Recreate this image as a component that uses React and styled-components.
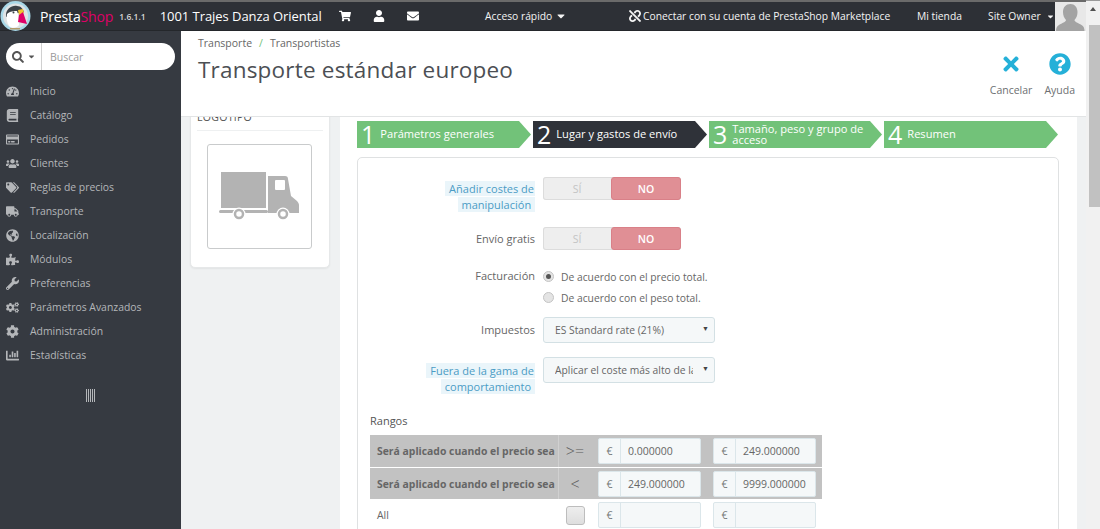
import styled, { createGlobalStyle } from "styled-components";
import {
  FaTachometerAlt,
  FaBook,
  FaRegCreditCard,
  FaUsers,
  FaTags,
  FaTruck,
  FaGlobeAmericas,
  FaPuzzlePiece,
  FaWrench,
  FaCogs,
  FaCog,
  FaSearch,
  FaShoppingCart,
  FaUser,
  FaEnvelope,
  FaUnlink,
  FaTimes,
  FaQuestionCircle,
  FaCaretDown,
  FaChartBar,
} from "react-icons/fa";

const GlobalStyle = createGlobalStyle`
  html, body { margin: 0; padding: 0; height: 100%; overflow: hidden; }
  body { font-family: "Open Sans", "Liberation Sans", sans-serif; font-size: 11px; color: #555; }
  * { box-sizing: border-box; }
`;

const Window = styled.div`
  display: flex;
  width: 1100px;
  height: 529px;
  overflow: hidden;
  background: #eff1f2;
`;

const Page = styled.div`
  flex: 1;
  min-width: 0;
  display: flex;
  flex-direction: column;
`;

const Scrollbar = styled.div`
  width: 14px;
  background: #f1f1f1;
  border-top: 1px solid #9a9a9a;
  display: flex;
  flex-direction: column;
  align-items: center;
`;

const ScrollArrow = styled.div`
  height: 16px;
  padding-top: 6px;
  &::before {
    content: "";
    display: block;
    border-left: 3px solid transparent;
    border-right: 3px solid transparent;
    border-bottom: 4px solid #505050;
  }
`;

const ScrollThumb = styled.div`
  margin: 8px 0 0 2px;
  width: 11px;
  height: 182px;
  background: #c1c1c1;
`;

const TopBar = styled.header`
  height: 31px;
  flex: none;
  display: flex;
  align-items: center;
  background: #2d3036;
  border-top: 2px solid #6a6a6a;
  border-bottom: 1px solid #24272b;
  color: #fff;
  position: relative;
`;

const LogoMark = styled.svg`
  width: 32px;
  height: 32px;
  flex: none;
  margin: -1px 0 0 0;
`;

const Brand = styled.span`
  margin-left: 8px;
  font-size: 14.1px;
  color: #fff;
  letter-spacing: -0.2px;
  em { font-style: normal; color: #df0067; }
`;

const Version = styled.span`
  margin-left: 6px;
  font-size: 8.5px;
  font-weight: 600;
  color: #d8d8d8;
`;

const ShopName = styled.span`
  margin-left: 14px;
  font-size: 13px;
  letter-spacing: -0.05px;
`;

const QuickIcons = styled.div`
  display: flex;
  align-items: center;
  gap: 22px;
  margin-left: 17px;
  font-size: 12px;
  svg { display: block; }
`;

const BarItem = styled.span`
  position: absolute;
  left: ${(p) => p.$left}px;
  top: 6px;
  font-size: 10.3px;
  line-height: 16px;
  display: flex;
  align-items: center;
  gap: ${(p) => p.$gap || 2}px;
  white-space: nowrap;
  color: #f4f4f4;
`;

const Avatar = styled.div`
  position: absolute;
  left: 1055px;
  top: 0;
  width: 31px;
  height: 29px;
  background: #e8e8e8;
  overflow: hidden;
`;

const Body = styled.div`
  flex: 1;
  min-height: 0;
  display: flex;
`;

const Sidebar = styled.aside`
  width: 181px;
  flex: none;
  background: #363a41;
  padding-top: 12px;
`;

const SearchBox = styled.div`
  display: flex;
  align-items: center;
  margin: 0 6px 0 6px;
  height: 27px;
  border-radius: 14px;
  background: #fff;
`;

const SearchButton = styled.div`
  width: 36px;
  height: 100%;
  display: flex;
  align-items: center;
  justify-content: center;
  gap: 3px;
  color: #555;
  font-size: 12px;
  border-right: 1px solid #d0d0d0;
`;

const SearchHint = styled.span`
  margin-left: 8px;
  font-size: 10.5px;
  color: #9a9a9a;
`;

const Menu = styled.nav`
  margin-top: 9px;
`;

const MenuItem = styled.div`
  height: 24px;
  display: flex;
  align-items: center;
  color: #b4b6b9;
  font-size: 10.4px;
`;

const MenuIcon = styled.span`
  width: 30px;
  padding-left: 6px;
  display: flex;
  justify-content: flex-start;
  font-size: 13px;
  color: #b4b6b9;
  svg { display: block; }
`;

const Collapse = styled.div`
  width: 9px;
  height: 13px;
  margin: 22px 0 0 86px;
  background: repeating-linear-gradient(90deg, #b4b6b9 0 1px, #363a41 1px 2px);
`;

const Main = styled.main`
  flex: 1;
  min-width: 0;
  display: flex;
  flex-direction: column;
  overflow: hidden;
`;

const PageHead = styled.div`
  height: 86px;
  flex: none;
  background: #fff;
  border-bottom: 1px solid #e2e4e5;
  padding: 5px 11px 0 17px;
  display: flex;
  justify-content: space-between;
  position: relative;
  z-index: 1;
`;

const Crumbs = styled.div`
  font-size: 10.5px;
  line-height: 15px;
  color: #666;
  i { font-style: normal; color: #72c279; margin: 0 7px; }
`;

const Title = styled.h1`
  margin: 3px 0 0;
  font-size: 22.5px;
  line-height: 32px;
  font-weight: 400;
  letter-spacing: 0.2px;
  color: #4c4f54;
`;

const Actions = styled.div`
  display: flex;
  gap: 12px;
  padding-top: 17px;
`;

const Action = styled.div`
  display: flex;
  flex-direction: column;
  align-items: center;
  gap: 8px;
  font-size: 10.5px;
  line-height: 14px;
  color: #6d6f72;
  svg { color: #25b0d8; font-size: 22px; display: block; }
`;

const Content = styled.div`
  flex: 1;
  min-height: 0;
  display: flex;
  align-items: flex-start;
  padding-left: 9px;
`;

const LogoCard = styled.section`
  width: 140px;
  flex: none;
  margin-top: -9px;
  height: 160px;
  background: #fff;
  border: 1px solid #e6e8e9;
  border-radius: 5px;
  box-shadow: 0 1px 2px rgba(0, 0, 0, 0.06);
  padding: 0 6px;
`;

const LogoTitle = styled.div`
  height: 22px;
  line-height: 16px;
  font-size: 10.5px;
  letter-spacing: 0.3px;
  color: #555;
  border-bottom: 1px solid #eef0f1;
`;

const TruckFrame = styled.div`
  margin: 13px 10px 0;
  width: 105px;
  height: 105px;
  border: 1px solid #c9cbcc;
  border-radius: 3px;
  display: flex;
  align-items: center;
  justify-content: center;
`;

const Wizard = styled.div`
  margin-left: 10px;
  width: 737px;
  background: #fff;
  padding: 4px 18px 0 17px;
  min-height: 500px;
`;

const Steps = styled.div`
  display: flex;
  gap: 2px;
  height: 27px;
`;

const Step = styled.div`
  width: ${(p) => p.$width}px;
  height: 27px;
  flex: none;
  display: flex;
  align-items: center;
  color: #fff;
  background: ${(p) => (p.$active ? "#2f3239" : "#72c279")};
  clip-path: polygon(0 0, calc(100% - 12px) 0, 100% 50%, calc(100% - 12px) 100%, 0 100%);
  padding-left: 4px;
  font-size: 11.1px;
  line-height: 11px;
  font-weight: 500;
`;

const StepNumber = styled.span`
  font-size: 25px;
  line-height: 27px;
  font-weight: 400;
  margin-right: 5px;
`;

const StepText = styled.span`
  width: 140px;
  margin-top: -2px;
`;

const FormCard = styled.div`
  margin-top: 9px;
  border: 1px solid #dfe1e2;
  border-radius: 5px 5px 0 0;
  padding: 19px 0 0 12px;
  min-height: 380px;
`;

const Row = styled.div`
  display: flex;
  align-items: ${(p) => p.$align || "flex-start"};
  margin-bottom: ${(p) => p.$gap || 0}px;
`;

const LabelCell = styled.div`
  width: 165px;
  flex: none;
  text-align: right;
  padding-top: ${(p) => p.$top || 0}px;
  font-size: 11px;
  line-height: 16px;
  color: #666;
`;

const HelpLabel = styled.span`
  color: #4a9cc5;
  background: #eaf5fa;
  box-decoration-break: clone;
  -webkit-box-decoration-break: clone;
  padding: 0 1px 0 4px;
  line-height: 16px;
`;

const Field = styled.div`
  margin-left: 8px;
`;

const Toggle = styled.div`
  display: flex;
  width: 138px;
  height: 23px;
  border-radius: 3px;
  background: #eeeeee;
  box-shadow: inset 0 0 0 1px #dcdcdc;
`;

const ToggleSide = styled.div`
  flex: 1;
  display: flex;
  align-items: center;
  justify-content: center;
  font-size: 10.5px;
  font-weight: ${(p) => (p.$on ? 600 : 400)};
  border-radius: 3px;
  color: ${(p) => (p.$on ? "#fff" : "#c4c4c4")};
  background: ${(p) => (p.$on ? "#e08f95" : "transparent")};
  border: ${(p) => (p.$on ? "1px solid #d98088" : "none")};
`;

const RadioLine = styled.label`
  height: 21px;
  display: flex;
  align-items: center;
  gap: 7px;
  font-size: 10.3px;
  color: #666;
`;

const Radio = styled.span`
  width: 11px;
  height: 11px;
  border-radius: 50%;
  border: 1px solid #c4c4c4;
  background: #e4e4e4;
  display: flex;
  align-items: center;
  justify-content: center;
  &::after {
    content: "";
    width: 5px;
    height: 5px;
    border-radius: 50%;
    background: ${(p) => (p.$checked ? "#555" : "transparent")};
  }
`;

const Select = styled.div`
  width: 172px;
  height: 26px;
  padding: 0 5px 0 11px;
  display: flex;
  align-items: center;
  justify-content: space-between;
  font-size: 10.3px;
  color: #666;
  background: #f5f8f9;
  border: 1px solid #d3e0e4;
  border-radius: 3px;
  span { width: 138px; overflow: hidden; white-space: nowrap; }
  b { font-size: 7px; color: #444; margin-top: -3px; }
`;

const RangesTitle = styled.div`
  margin-top: 18px;
  font-size: 11px;
  line-height: 16px;
  color: #555;
`;

const RangeTable = styled.div`
  margin-top: 6px;
  width: 452px;
`;

const RangeRow = styled.div`
  display: flex;
  align-items: center;
  height: ${(p) => p.$height}px;
  margin-bottom: 1px;
  background: ${(p) => (p.$head ? "#c2c2c2" : "#fff")};
`;

const RangeLabel = styled.div`
  width: 189px;
  height: 100%;
  flex: none;
  display: flex;
  align-items: center;
  padding-left: 7px;
  font-size: 10.4px;
  font-weight: ${(p) => (p.$head ? 700 : 400)};
  color: #666;
  border-right: ${(p) => (p.$head ? "1px solid #d0d0d0" : "none")};
  white-space: nowrap;
`;

const Operator = styled.div`
  width: 32px;
  flex: none;
  text-align: center;
  font-size: 16px;
  font-weight: 300;
  color: #5c5c5c;
`;

const CheckBox = styled.div`
  width: 19px;
  height: 19px;
  margin: 0 auto;
  background: linear-gradient(#eeeeee, #dedede);
  border: 1px solid #bdbdbd;
  border-radius: 3px;
`;

const Money = styled.div`
  display: flex;
  width: 103px;
  height: 26px;
  margin: 0 12px 0 7px;
  flex: none;
  background: #f5f8f9;
  border: 1px solid #dbe6ea;
  border-radius: 2px;
  font-size: 10.5px;
  color: #666;
  & + & { margin-left: 0; }
`;

const Currency = styled.span`
  width: 22px;
  display: flex;
  align-items: center;
  justify-content: center;
  border-right: 1px solid #dbe6ea;
  color: #777;
`;

const Amount = styled.span`
  flex: 1;
  display: flex;
  align-items: center;
  padding-left: 7px;
`;

const menu = [
  ["Inicio", FaTachometerAlt],
  ["Catálogo", FaBook],
  ["Pedidos", FaRegCreditCard],
  ["Clientes", FaUsers],
  ["Reglas de precios", FaTags],
  ["Transporte", FaTruck],
  ["Localización", FaGlobeAmericas],
  ["Módulos", FaPuzzlePiece],
  ["Preferencias", FaWrench],
  ["Parámetros Avanzados", FaCogs],
  ["Administración", FaCog],
  ["Estadísticas", FaChartBar],
];

const ranges = [
  [">=", "0.000000", "249.000000", 32],
  ["<", "249.000000", "9999.000000", 31],
];

function Puffin() {
  return (
    <LogoMark viewBox="0 0 32 32">
      <circle cx="15.5" cy="16" r="15" fill="#a9d8e8" />
      <circle cx="15.5" cy="16" r="12.5" fill="#dfe3e5" />
      <path d="M6 15c0-6 6-10 11-9 4 0 6 3 7 6l-6 1-12 4z" fill="#3c4248" />
      <path d="M7 14c3-3 7-3 10-3l1 3 1 11c-2 3-7 4-10 1-2-3-3-8-2-12z" fill="#ffffff" />
      <circle cx="13.5" cy="12.5" r="1" fill="#3c4248" />
      <path d="M18 10l5-1 1 4-5 2z" fill="#f2c230" />
      <path d="M19 15l4-3 4 12-9-2z" fill="#df0067" />
      <path d="M10 28h10v1.5H10z" fill="#b39b6b" />
    </LogoMark>
  );
}

function TruckPicture() {
  return (
    <svg width="82" height="50" viewBox="0 0 82 50">
      <rect x="2" y="0" width="45" height="36" fill="#b3b3b3" />
      <path d="M49 4h17c2 0 3 1 3 3l3 17 6 5c1 1 2 3 2 4v8H49z" fill="#b3b3b3" />
      <rect x="56" y="8" width="10" height="10" rx="1" fill="#fff" />
      <rect x="0" y="38" width="49" height="3" rx="1.5" fill="#b3b3b3" />
      <circle cx="20" cy="42" r="6.5" fill="#fff" />
      <circle cx="20" cy="42" r="4" fill="none" stroke="#b3b3b3" strokeWidth="2.5" />
      <circle cx="64" cy="42" r="6.5" fill="#fff" />
      <circle cx="64" cy="42" r="4" fill="none" stroke="#b3b3b3" strokeWidth="2.5" />
    </svg>
  );
}

export default function App() {
  return (
    <Window>
      <GlobalStyle />
      <Page>
        <TopBar>
          <Puffin />
          <Brand>
            Presta<em>Shop</em>
          </Brand>
          <Version>1.6.1.1</Version>
          <ShopName>1001 Trajes Danza Oriental</ShopName>
          <QuickIcons>
            <FaShoppingCart />
            <FaUser />
            <FaEnvelope />
          </QuickIcons>
          <BarItem $left={485} $gap={3}>
            Acceso rápido <FaCaretDown size={12} />
          </BarItem>
          <BarItem $left={629}>
            <FaUnlink size={12} /> Conectar con su cuenta de PrestaShop Marketplace
          </BarItem>
          <BarItem $left={917}>Mi tienda</BarItem>
          <BarItem $left={988} $gap={5}>
            Site Owner <FaCaretDown size={9} />
          </BarItem>
          <Avatar>
            <svg width="31" height="29" viewBox="0 0 31 29">
              <path
                d="M15.5 2c4 0 7 3 7 8 0 3-1 6-3 8 0 2 4 3 7 5 2 1 3 3 3 6H1c0-3 1-5 3-6 3-2 7-3 7-5-2-2-3-5-3-8 0-5 3-8 7.5-8z"
                fill="#a3a3a3"
              />
            </svg>
          </Avatar>
        </TopBar>
        <Body>
          <Sidebar>
            <SearchBox>
              <SearchButton>
                <FaSearch />
                <FaCaretDown size={9} />
              </SearchButton>
              <SearchHint>Buscar</SearchHint>
            </SearchBox>
            <Menu>
              {menu.map(([label, Icon]) => (
                <MenuItem key={label}>
                  <MenuIcon>
                    <Icon />
                  </MenuIcon>
                  {label}
                </MenuItem>
              ))}
            </Menu>
            <Collapse />
          </Sidebar>
          <Main>
            <PageHead>
              <div>
                <Crumbs>
                  Transporte<i>/</i>Transportistas
                </Crumbs>
                <Title>Transporte estándar europeo</Title>
              </div>
              <Actions>
                <Action>
                  <FaTimes />
                  Cancelar
                </Action>
                <Action>
                  <FaQuestionCircle />
                  Ayuda
                </Action>
              </Actions>
            </PageHead>
            <Content>
              <LogoCard>
                <LogoTitle>LOGOTIPO</LogoTitle>
                <TruckFrame>
                  <TruckPicture />
                </TruckFrame>
              </LogoCard>
              <Wizard>
                <Steps>
                  <Step $width={174}>
                    <StepNumber>1</StepNumber>
                    <StepText>Parámetros generales</StepText>
                  </Step>
                  <Step $width={174} $active>
                    <StepNumber>2</StepNumber>
                    <StepText>Lugar y gastos de envío</StepText>
                  </Step>
                  <Step $width={173}>
                    <StepNumber>3</StepNumber>
                    <StepText>Tamaño, peso y grupo de acceso</StepText>
                  </Step>
                  <Step $width={174}>
                    <StepNumber>4</StepNumber>
                    <StepText>Resumen</StepText>
                  </Step>
                </Steps>
                <FormCard>
                  <Row $gap={14}>
                    <LabelCell $top={4}>
                      <HelpLabel>
                        Añadir costes de
                        <br />
                        manipulación&nbsp;
                      </HelpLabel>
                    </LabelCell>
                    <Field>
                      <Toggle>
                        <ToggleSide>SÍ</ToggleSide>
                        <ToggleSide $on>NO</ToggleSide>
                      </Toggle>
                    </Field>
                  </Row>
                  <Row $gap={16} $align="center">
                    <LabelCell>Envío gratis</LabelCell>
                    <Field>
                      <Toggle>
                        <ToggleSide>SÍ</ToggleSide>
                        <ToggleSide $on>NO</ToggleSide>
                      </Toggle>
                    </Field>
                  </Row>
                  <Row $gap={9}>
                    <LabelCell $top={2}>Facturación</LabelCell>
                    <Field>
                      <RadioLine>
                        <Radio $checked />
                        De acuerdo con el precio total.
                      </RadioLine>
                      <RadioLine>
                        <Radio />
                        De acuerdo con el peso total.
                      </RadioLine>
                    </Field>
                  </Row>
                  <Row $gap={14} $align="center">
                    <LabelCell>Impuestos</LabelCell>
                    <Field>
                      <Select>
                        <span>ES Standard rate (21%)</span>
                        <b>▼</b>
                      </Select>
                    </Field>
                  </Row>
                  <Row>
                    <LabelCell $top={6}>
                      <HelpLabel>
                        Fuera de la gama de
                        <br />
                        comportamiento&nbsp;
                      </HelpLabel>
                    </LabelCell>
                    <Field>
                      <Select>
                        <span>Aplicar el coste más alto de la gama</span>
                        <b>▼</b>
                      </Select>
                    </Field>
                  </Row>
                  <RangesTitle>Rangos</RangesTitle>
                  <RangeTable>
                    {ranges.map(([op, from, to, height]) => (
                      <RangeRow key={op} $head $height={height}>
                        <RangeLabel $head>Será aplicado cuando el precio sea</RangeLabel>
                        <Operator>{op}</Operator>
                        <Money>
                          <Currency>€</Currency>
                          <Amount>{from}</Amount>
                        </Money>
                        <Money>
                          <Currency>€</Currency>
                          <Amount>{to}</Amount>
                        </Money>
                      </RangeRow>
                    ))}
                    <RangeRow $height={30}>
                      <RangeLabel>All</RangeLabel>
                      <Operator>
                        <CheckBox />
                      </Operator>
                      <Money>
                        <Currency>€</Currency>
                        <Amount />
                      </Money>
                      <Money>
                        <Currency>€</Currency>
                        <Amount />
                      </Money>
                    </RangeRow>
                  </RangeTable>
                </FormCard>
              </Wizard>
            </Content>
          </Main>
        </Body>
      </Page>
      <Scrollbar>
        <ScrollArrow />
        <ScrollThumb />
      </Scrollbar>
    </Window>
  );
}
